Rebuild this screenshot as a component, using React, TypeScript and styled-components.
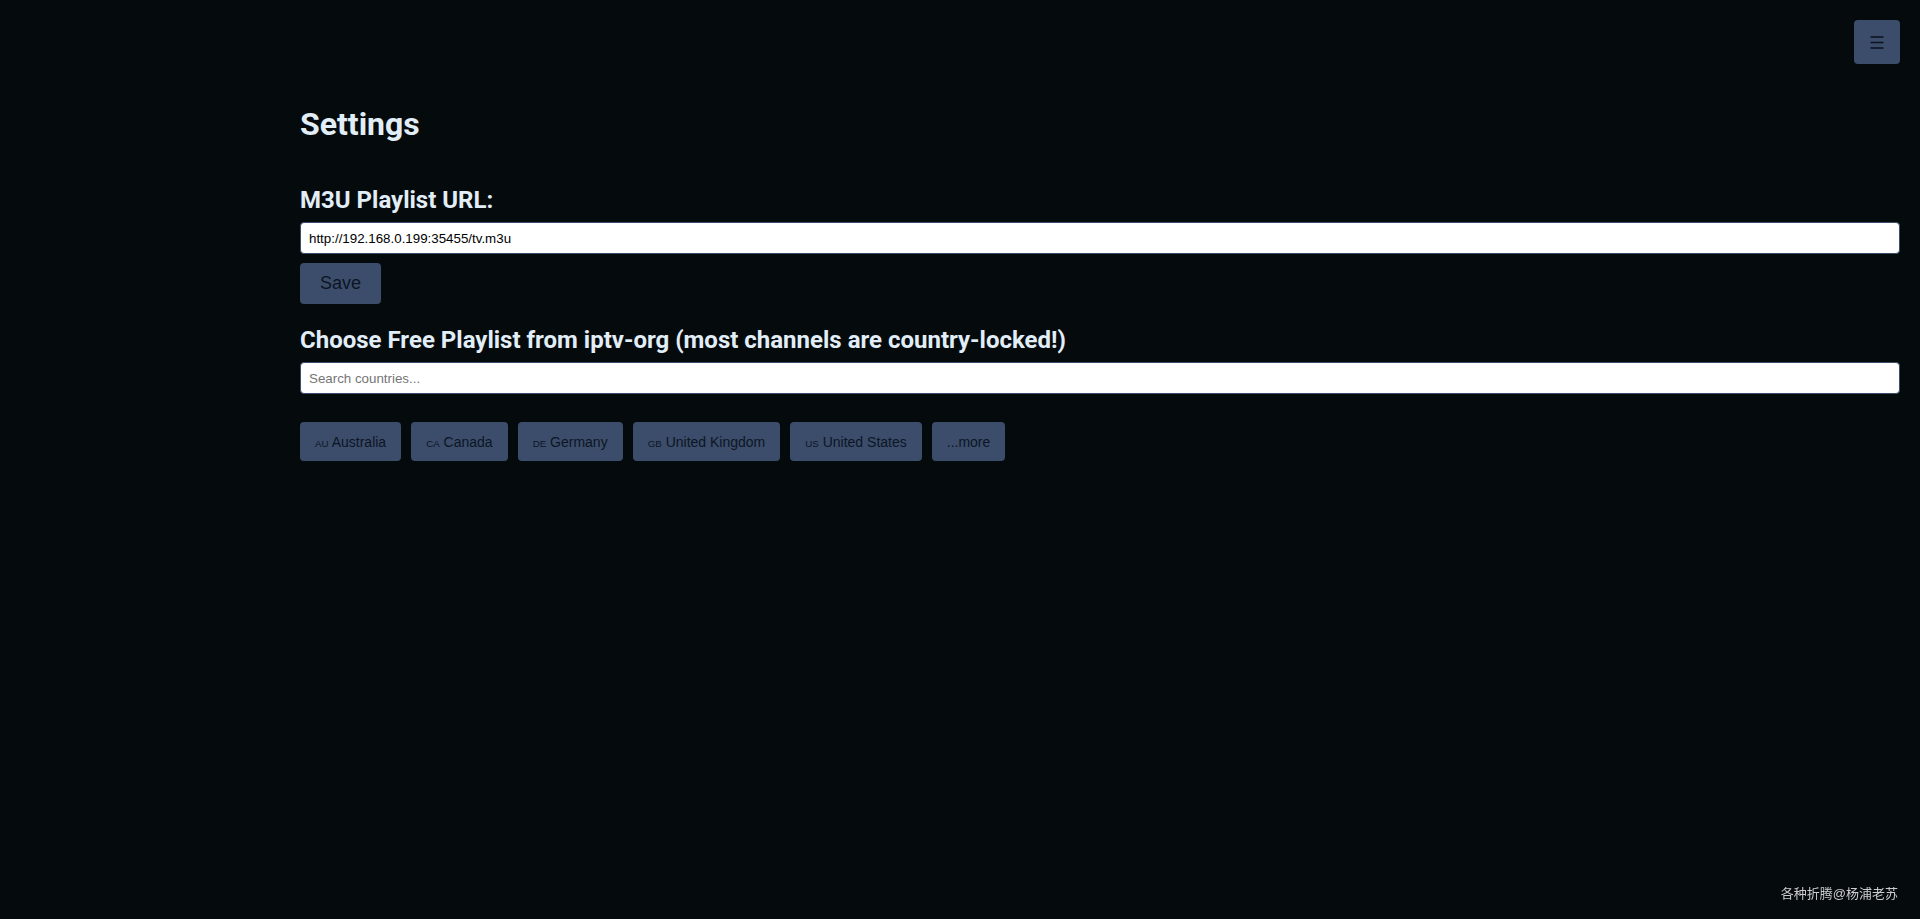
import * as React from "react";
import styled, { createGlobalStyle } from "styled-components";

const countries = [
  { code: "AU", name: "Australia" },
  { code: "CA", name: "Canada" },
  { code: "DE", name: "Germany" },
  { code: "GB", name: "United Kingdom" },
  { code: "US", name: "United States" },
];

const App = () => {
  return (
    <>
      <GlobalStyle />
      <MenuButton aria-label="menu">
        <svg width="14" height="13" viewBox="0 0 14 13">
          <g stroke="#0d1524" strokeWidth="1.6">
            <line x1="0.5" y1="1" x2="13.5" y2="1" />
            <line x1="0.5" y1="6.5" x2="13.5" y2="6.5" />
            <line x1="0.5" y1="12" x2="13.5" y2="12" />
          </g>
        </svg>
      </MenuButton>
      <Page>
        <Title>Settings</Title>
        <Label $top={43}>M3U Playlist URL:</Label>
        <Input type="text" defaultValue="http://192.168.0.199:35455/tv.m3u" />
        <SaveButton>Save</SaveButton>
        <Label $top={22}>
          Choose Free Playlist from iptv-org (most channels are country-locked!)
        </Label>
        <Input type="text" placeholder="Search countries..." />
        <ChipRow>
          {countries.map((c) => (
            <Chip key={c.code}>
              <Flag>{c.code}</Flag> {c.name}
            </Chip>
          ))}
          <Chip>...more</Chip>
        </ChipRow>
      </Page>
      <Watermark>各种折腾@杨浦老苏</Watermark>
    </>
  );
};

const GlobalStyle = createGlobalStyle`
  html, body {
    margin: 0;
    background: #050a0d;
    min-height: 100%;
  }
  body {
    font-family: Roboto, "Liberation Sans", sans-serif;
    color: #e2eef7;
  }
`;

const Page = styled.main`
  display: flex;
  flex-direction: column;
  align-items: flex-start;
  padding: 105px 20px 0 300px;
`;

const Title = styled.h1`
  margin: 0;
  font-family: Roboto, sans-serif;
  font-size: 32px;
  font-weight: 700;
  line-height: normal;
  color: #e2eef7;
`;

const Label = styled.h2<{ $top: number }>`
  margin: ${(p) => p.$top}px 0 8px;
  font-family: Roboto, sans-serif;
  font-size: 24px;
  font-weight: 700;
  line-height: normal;
  color: #e2eef7;
`;

const Input = styled.input`
  box-sizing: border-box;
  width: 100%;
  height: 32px;
  padding: 0 8px;
  border: 1px solid #3b4d6b;
  border-radius: 4px;
  background: #fff;
  color: #000;
  font-family: "Liberation Sans", Arial, sans-serif;
  font-size: 13.33px;
  outline: none;

  &::placeholder {
    color: #757575;
  }
`;

const SaveButton = styled.button`
  box-sizing: border-box;
  margin-top: 9px;
  height: 41px;
  padding: 0 20px;
  border: none;
  border-radius: 4px;
  background: #3b4d6b;
  color: #0d1524;
  font-family: "Liberation Sans", Arial, sans-serif;
  font-size: 18px;
  cursor: pointer;
`;

const ChipRow = styled.div`
  display: flex;
  flex-wrap: wrap;
  gap: 10px;
  margin-top: 28px;
`;

const Chip = styled.button`
  box-sizing: border-box;
  height: 39px;
  padding: 0 15px;
  border: none;
  border-radius: 4px;
  background: #3b4d6b;
  color: #0d1524;
  font-family: "Liberation Sans", Arial, sans-serif;
  font-size: 14px;
  white-space: pre;
  cursor: pointer;
`;

const Flag = styled.span`
  font-size: 9.75px;
`;

const MenuButton = styled.button`
  position: fixed;
  top: 20px;
  right: 20px;
  width: 46px;
  height: 44px;
  display: flex;
  align-items: center;
  justify-content: center;
  padding: 0;
  border: none;
  border-radius: 4px;
  background: #3b4d6b;
  cursor: pointer;
`;

const Watermark = styled.div`
  position: fixed;
  right: 22px;
  bottom: 17px;
  font-family: "Liberation Sans", "Noto Sans CJK SC", sans-serif;
  font-size: 13px;
  color: #cccccc;
`;

export default App;
